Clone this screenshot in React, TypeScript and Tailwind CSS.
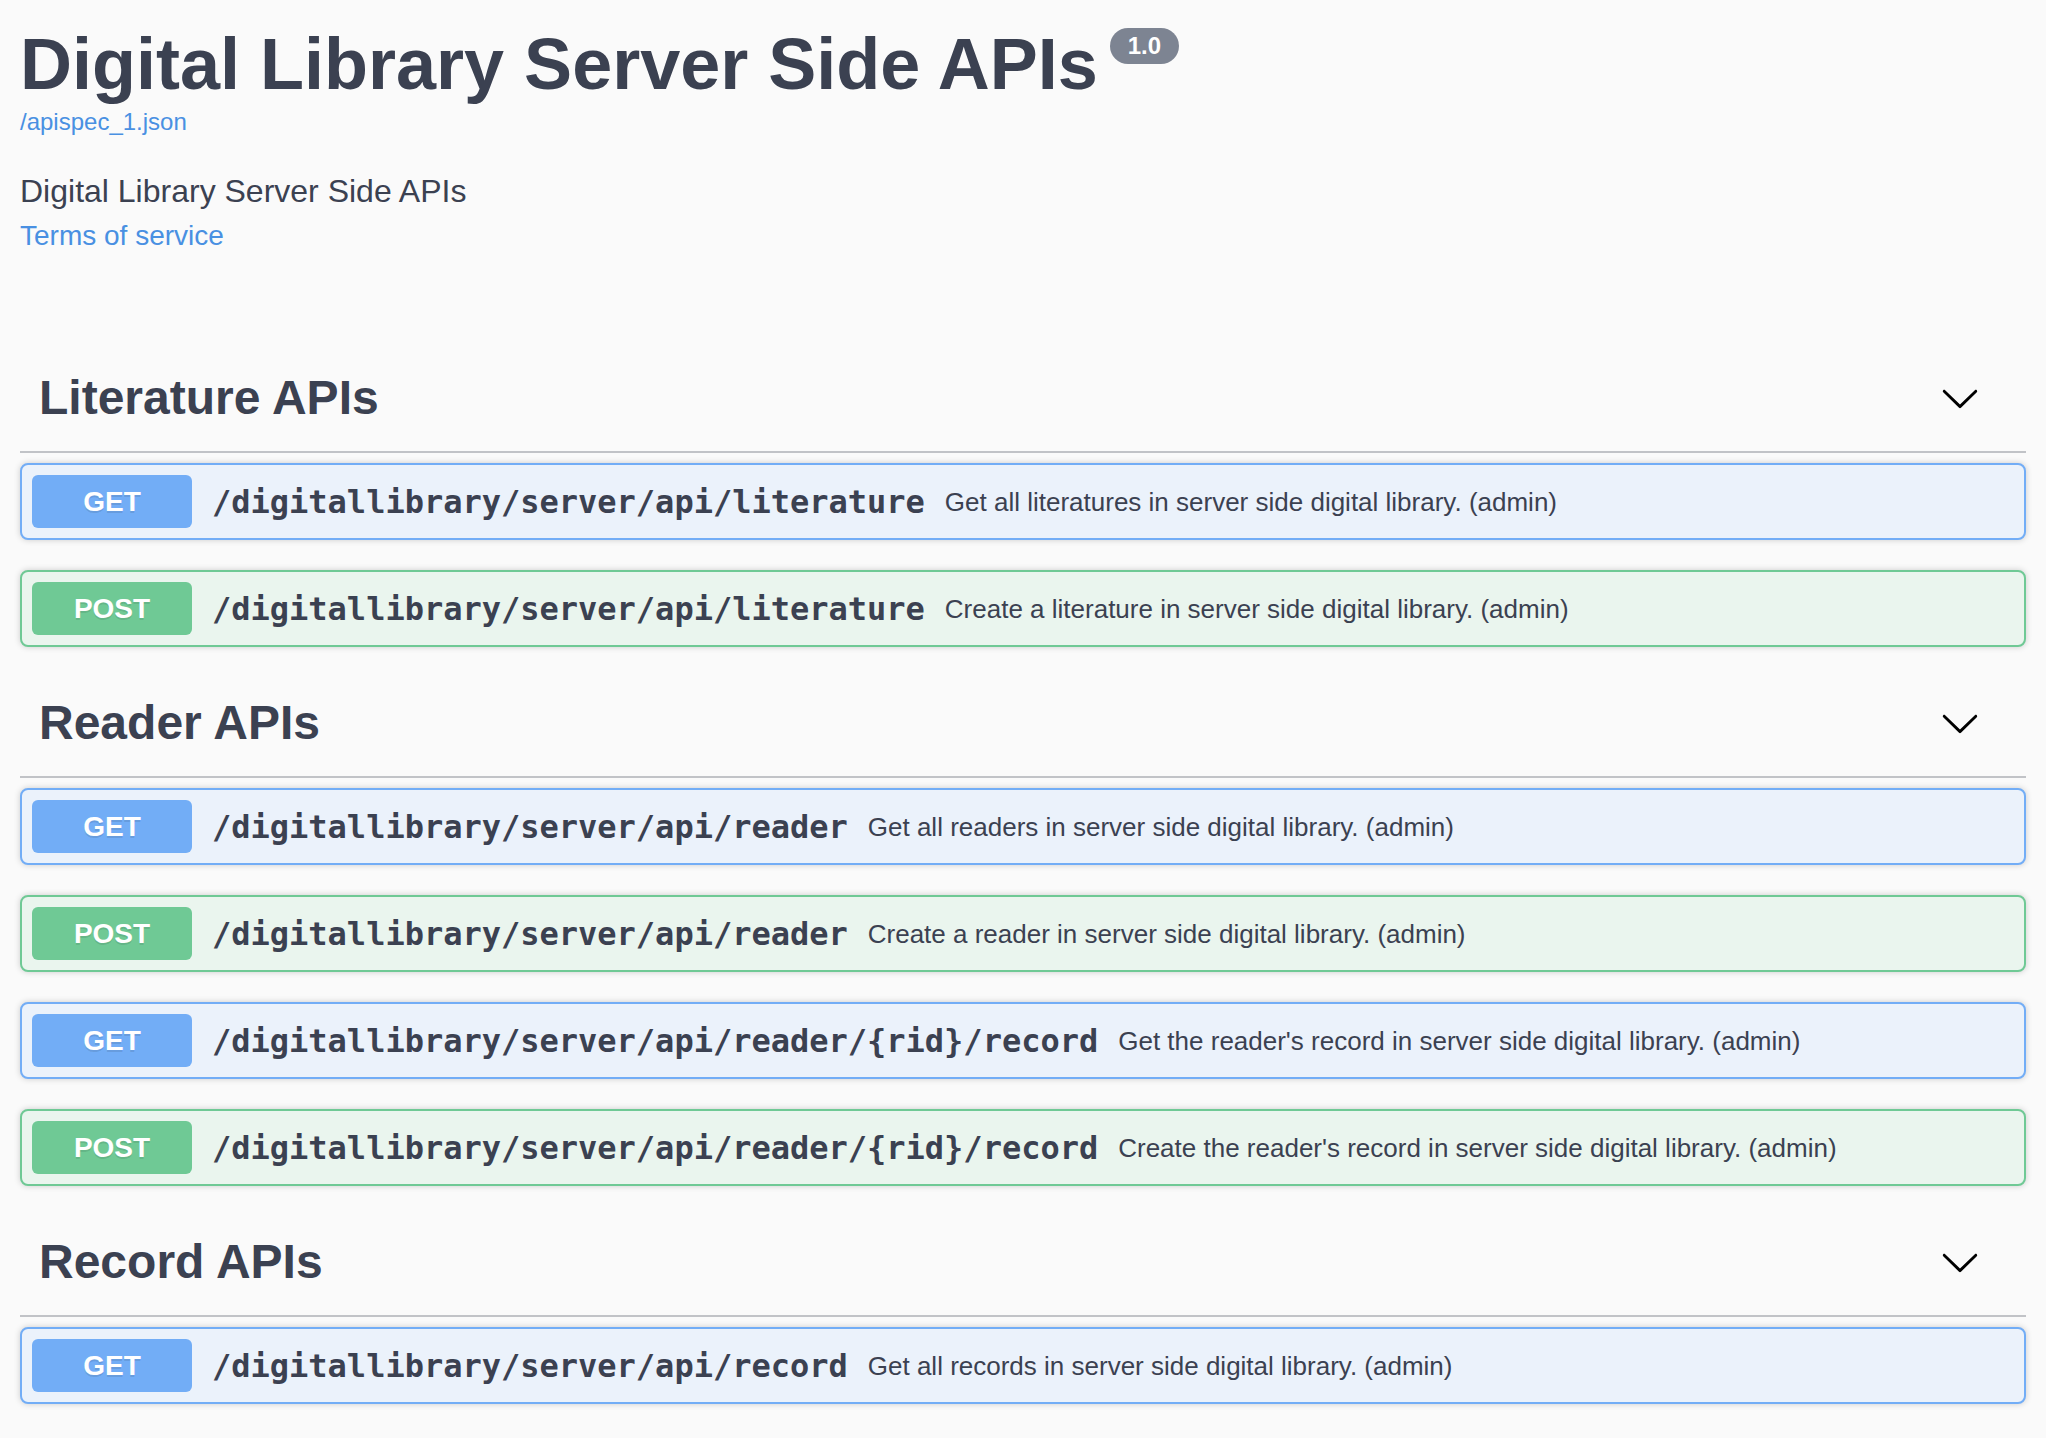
import React from 'react';

type Method = 'GET' | 'POST';

interface Operation {
    method: Method;
    path: string;
    summary: string;
}

interface TagSection {
    name: string;
    ops: Operation[];
}

const sections: TagSection[] = [
    {
        name: 'Literature APIs',
        ops: [
            { method: 'GET', path: '/digitallibrary/server/api/literature', summary: 'Get all literatures in server side digital library. (admin)' },
            { method: 'POST', path: '/digitallibrary/server/api/literature', summary: 'Create a literature in server side digital library. (admin)' },
        ],
    },
    {
        name: 'Reader APIs',
        ops: [
            { method: 'GET', path: '/digitallibrary/server/api/reader', summary: 'Get all readers in server side digital library. (admin)' },
            { method: 'POST', path: '/digitallibrary/server/api/reader', summary: 'Create a reader in server side digital library. (admin)' },
            { method: 'GET', path: '/digitallibrary/server/api/reader/{rid}/record', summary: "Get the reader's record in server side digital library. (admin)" },
            { method: 'POST', path: '/digitallibrary/server/api/reader/{rid}/record', summary: "Create the reader's record in server side digital library. (admin)" },
        ],
    },
    {
        name: 'Record APIs',
        ops: [
            { method: 'GET', path: '/digitallibrary/server/api/record', summary: 'Get all records in server side digital library. (admin)' },
        ],
    },
];

// per-method colours, written out so Tailwind picks them up
const methodStyles: Record<Method, { box: string; badge: string }> = {
    GET: { box: 'border-[#72adf6] bg-[#ebf2fb]', badge: 'bg-[#72adf6]' },
    POST: { box: 'border-[#6fc995] bg-[#eaf5ee]', badge: 'bg-[#6fc995]' },
};

const Chevron: React.FC = () => (
    <svg width="40" height="40" viewBox="0 0 20 20" className="shrink-0" aria-hidden="true">
        <path
            fill="#000"
            d="M17.418 6.109c.272-.268.709-.268.979 0s.271.701 0 .969l-7.908 7.83c-.27.268-.707.268-.979 0l-7.908-7.83c-.27-.268-.27-.701 0-.969.271-.268.709-.268.979 0L10 13.25l7.418-7.141z"
        />
    </svg>
);

const OperationRow: React.FC<{ op: Operation }> = ({ op }) => {
    const style = methodStyles[op.method];
    return (
        <div className={`mb-[30px] flex items-center rounded-[8px] border-2 p-[10px] shadow-[0_0_6px_rgba(0,0,0,0.19)] ${style.box}`}>
            <span className={`flex h-[53px] w-[160px] shrink-0 items-center justify-center rounded-[6px] text-[28px] font-bold text-white [text-shadow:0_2px_0_rgba(0,0,0,0.1)] ${style.badge}`}>
                {op.method}
            </span>
            <span className="px-[20px] font-['DejaVu_Sans_Mono',monospace] text-[32px] font-bold leading-none">
                {op.path}
            </span>
            <span className="text-[26px] leading-none">{op.summary}</span>
        </div>
    );
};

const App: React.FC = () => {
    return (
        <div className="min-h-screen bg-[#fafafa] px-[20px] font-['Liberation_Sans',Arial,sans-serif] text-[#3b4151]">
            {/* INFO BLOCK */}
            <div className="mb-[100px]">
                <div className="flex items-start pt-[28px]">
                    <h1 className="text-[72px] font-bold leading-none">Digital Library Server Side APIs</h1>
                    <span className="ml-[12px] rounded-full bg-[#7d8492] px-[18px] py-[4px] text-[24px] font-bold leading-[28px] text-white">
                        1.0
                    </span>
                </div>
                <a className="mt-[8px] block text-[24px] leading-[28px] text-[#4990e2]">/apispec_1.json</a>
                <p className="mt-[37px] text-[32px] leading-[37px]">Digital Library Server Side APIs</p>
                <a className="mt-[10px] block text-[28px] leading-[32px] text-[#4990e2]">Terms of service</a>
            </div>

            {/* TAG SECTIONS */}
            {sections.map((section) => (
                <section key={section.name}>
                    <div className="mb-[10px] flex items-center border-b-2 border-[#c1c3c7] pb-[29px] pl-[19px] pr-[46px] pt-[22px]">
                        <h3 className="flex-1 text-[48px] font-bold leading-none">{section.name}</h3>
                        <Chevron />
                    </div>
                    {section.ops.map((op) => (
                        <OperationRow key={op.method + op.path} op={op} />
                    ))}
                </section>
            ))}
        </div>
    );
};

export default App;
